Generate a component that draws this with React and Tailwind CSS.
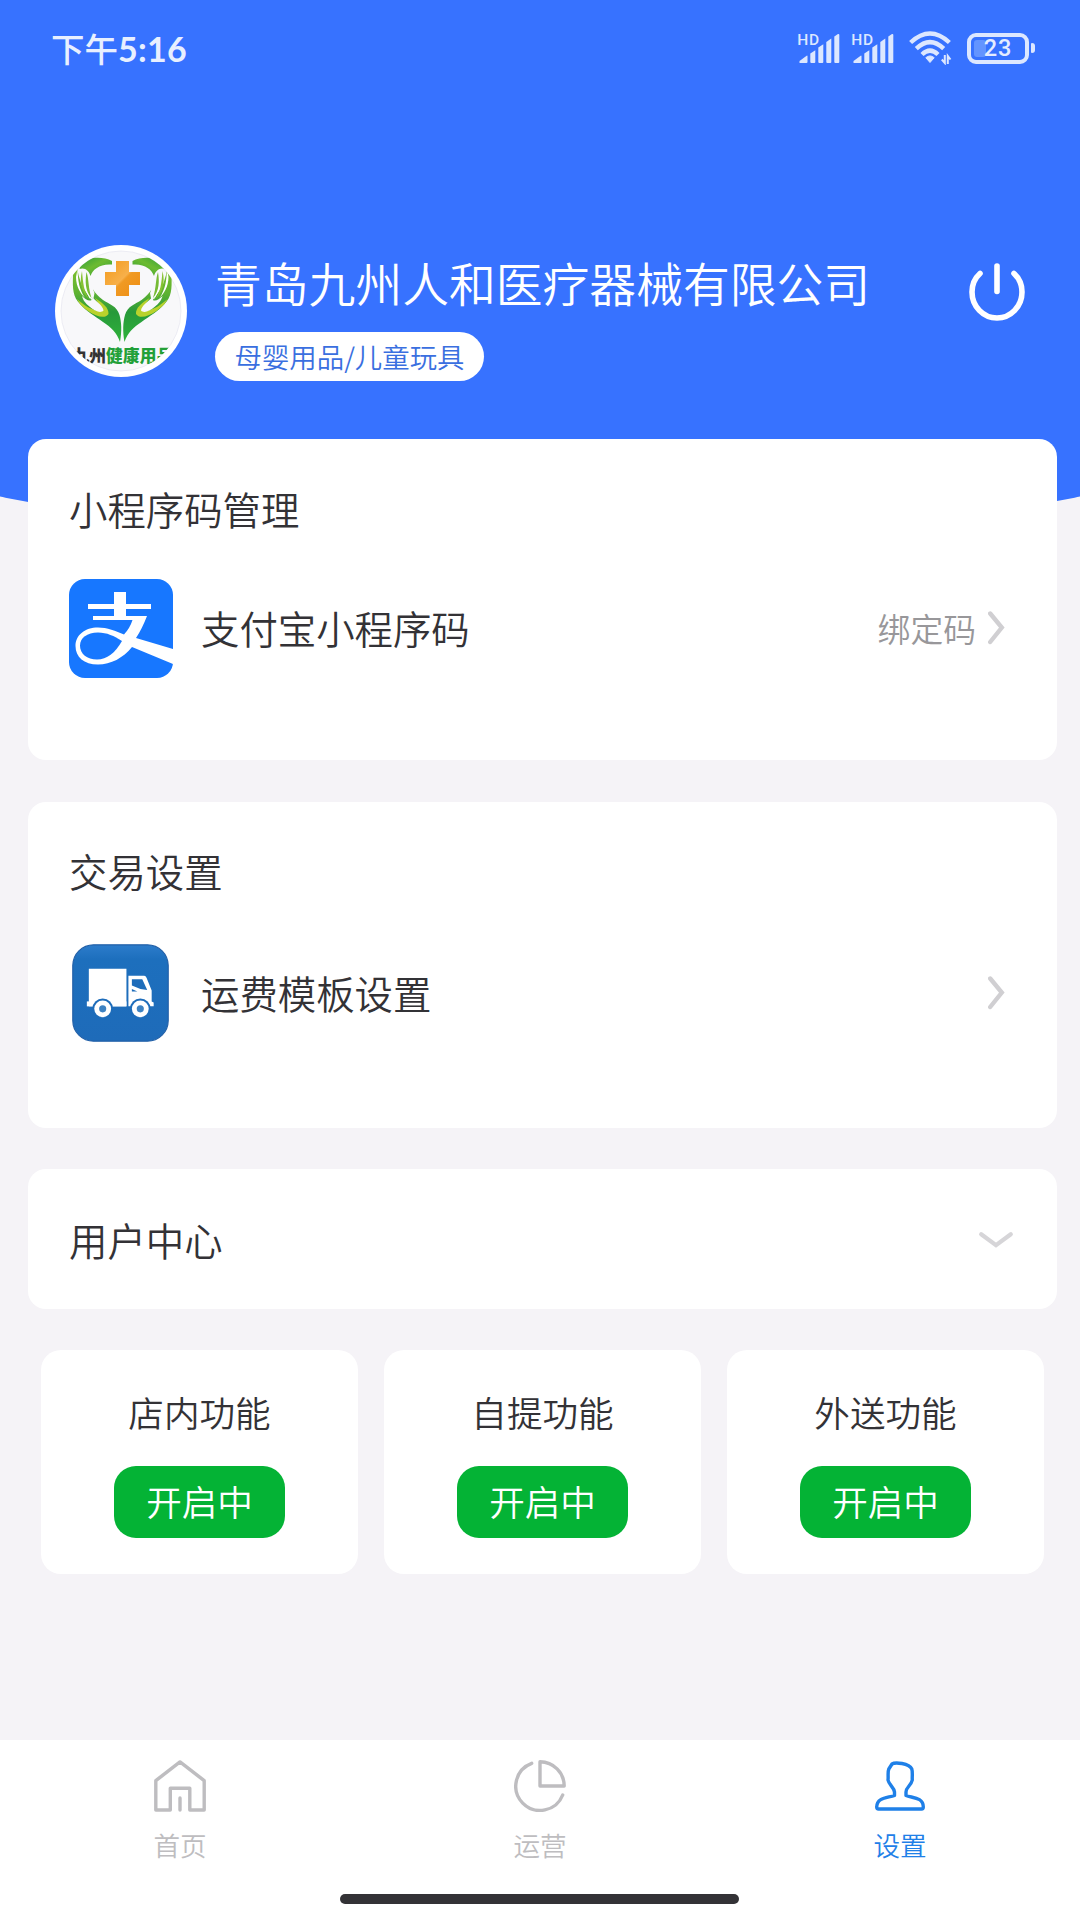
const SignalIcon = () => (
  <svg className="w-[42px] h-[31px] overflow-visible" viewBox="0 0 42 31">
    <text x="-0.800" y="11.500" fontSize="15.500" fontWeight="500" letterSpacing="0.800" fill="#dce7ff" fontFamily="Roboto, sans-serif">HD</text>
    <g fill="#dce7ff">
      <path d="M1.500 30 V28 L9 22.500 Q9.500 22.500 9.500 23.500 V29 Q9.500 30 8.500 30 Z" />
      <path d="M12.300 20.500 L17.300 17.300 V29 Q17.300 30 16.300 30 H13.300 Q12.300 30 12.300 29 Z" />
      <path d="M20.300 14.500 L25.300 11.200 V29 Q25.300 30 24.300 30 H21.300 Q20.300 30 20.300 29 Z" />
      <path d="M28.300 9 L33.300 5.600 V29 Q33.300 30 32.300 30 H29.300 Q28.300 30 28.300 29 Z" />
      <path d="M36.300 3.500 L40 1 Q41.300 0.600 41.300 2 V29 Q41.300 30 40.300 30 H37.300 Q36.300 30 36.300 29 Z" />
    </g>
  </svg>
);

const WifiIcon = () => (
  <svg className="w-[44px] h-[34px]" viewBox="0 0 44 34" fill="none" stroke="#dce7ff" strokeWidth="4.400">
    <path d="M1.600 11.500 Q21 -6.500 40.400 11.500" />
    <path d="M7.300 17.700 Q21 4.500 34.700 17.700" />
    <path d="M13 23.500 Q21 15.800 29 23.500" />
    <path d="M21 31.500 L16.800 26.700 Q21 23.200 25.200 26.700 Z" fill="#dce7ff" stroke="#dce7ff" strokeWidth="1" />
    <path d="M35.800 24 V32 L32.800 28.500 M38.800 33 V25 L41.500 28.500" strokeWidth="2" />
  </svg>
);

const BatteryIcon = () => (
  <div className="flex items-center gap-[2px]">
    <div className="relative flex h-[31px] w-[62px] items-center justify-center rounded-[9px] border-4 border-[#dce7ff]">
      <div className="absolute left-[3px] top-[3px] h-[17px] w-[12px] rounded-[3px] bg-[#6394ff]" />
      <span className="relative top-px font-[Roboto,sans-serif] text-[23.500px] font-medium leading-none tracking-[0.800px] text-[#e4ecff]">23</span>
    </div>
    <div className="h-[10px] w-[4px] rounded-r-[3px] rounded-l-[1px] bg-[#dce7ff]" />
  </div>
);

const HandHalf = () => (
  <g>
    <path d="M57 16 C50 12 38 12 33 14.500 C28 17 25 21 24.500 24 C30 22 34 26 35.500 31 C38 24 45 18.500 57 19.500 Z" fill="url(#leaf)" />
    <path d="M22 22 C18.500 24 18 26 18 31 C17.500 44 18 52 25 59 C31 66 40 71 48 77 C56 82 62 88 65 97 C67 86 66.500 77 64.500 70 C62 61 54 59 48 55 C43 51 40 48 38 44.500 L37.500 56 C33 50 29 45 26 38 Q23 30 22 22 Z" fill="url(#palm)" />
    <path d="M22.500 24 C23 36 24 44 30 53 C26 49 21 42 21 32 Z" fill="#fff" />
    <path d="M27 26 C28 38 29 47 34 54 C27 48 24 38 27 26 Z" fill="#86c232" />
    <path d="M29.500 33 C29 43 32 49 35.500 54.500 C34 47 32 42 32 33 Z" fill="#fff" />
    <path d="M31.500 27 C34 34 33 42 36.500 53 C30 46 30 36 31.500 27 Z" fill="#76bb35" />
    <path d="M35 33 L34.500 42 L38 56 L39.500 48 L37.500 43 Z" fill="#f8f8fa" />
    <path d="M40 53 C48 58 54 63 53.500 69 C50 74 42 72 33 66 C28 62 25 60 22 54 C29 60 36 65 44 66 C47 64 44 59 40 53 Z" fill="#b9d22c" />
    <path d="M38 53 C42 57 48 61 48.500 65.500 C46 68.500 40 66.500 35 62 C30 58 28 55 27 51 C31 55 36 58 38 53 Z" fill="#f8f8fa" />
  </g>
);

const Avatar = () => (
  <div className="h-[132px] w-[132px] shrink-0 rounded-full bg-white">
    <svg className="h-full w-full" viewBox="0 0 132 132">
      <defs>
        <linearGradient id="leaf" x1="0" y1="0" x2="1" y2="1">
          <stop offset="0" stopColor="#2f9e3a" />
          <stop offset="0.450" stopColor="#6cbb31" />
          <stop offset="1" stopColor="#2c9c3a" />
        </linearGradient>
        <linearGradient id="palm" x1="0" y1="0" x2="0" y2="1">
          <stop offset="0" stopColor="#7fc02c" />
          <stop offset="0.350" stopColor="#5db232" />
          <stop offset="0.600" stopColor="#27993a" />
          <stop offset="1" stopColor="#2fb33a" />
        </linearGradient>
        <linearGradient id="cross" x1="0" y1="0" x2="1" y2="1">
          <stop offset="0" stopColor="#f39a1c" />
          <stop offset="0.500" stopColor="#f7b04a" />
          <stop offset="0.550" stopColor="#f09a24" />
          <stop offset="1" stopColor="#ee8d12" />
        </linearGradient>
        <clipPath id="photo"><circle cx="66" cy="66" r="60" /></clipPath>
      </defs>
      <circle cx="66" cy="66" r="60" fill="#f8f8fa" stroke="#e3e3ee" strokeWidth="0.600" />
      <g clipPath="url(#photo)">
        <HandHalf />
        <g transform="translate(134.500 0) scale(-1 1)"><HandHalf /></g>
        <path d="M61 16 H74 V27 H85 V40 H74 V51 H61 V40 H50 V27 H61 Z" fill="url(#cross)" />
        <text x="17.500" y="116.800" fontSize="16.800" fontWeight="900" fontFamily="Noto Sans CJK SC, sans-serif" fill="#333">
          九州<tspan fill="#22a038">健康用品</tspan>
        </text>
      </g>
    </svg>
  </div>
);

const PowerIcon = () => (
  <svg className="h-[60px] w-[58px]" viewBox="0 0 58 60" fill="none" stroke="#fff" strokeWidth="5.600" strokeLinecap="round">
    <path d="M12 11.500 C6.500 16.500 4 23 4 30 A25 26 0 0 0 54 30 C54 23 51.500 16.500 46 11.500" />
    <path d="M29 4 V29.500" />
  </svg>
);

const AlipayIcon = () => (
  <svg className="h-[99px] w-[104px]" viewBox="0 0 104 99">
    <rect width="104" height="99" rx="16" fill="#1777ff" />
    <g fill="#fff">
      <path d="M45 13 H57 V25 H82 V30 H57 V37 H78 Q73 50 67 59 L104 70 V85 L63 68 C54 79 42 85.500 29 85.500 C15 85.500 6.500 78 6.500 67 C6.500 56 16 48.500 29 48.500 C38 48.500 47 52 55 55.500 Q61 49 63.500 41 H24 V37 H45 V30 H19 V25 H45 Z" />
    </g>
    <path d="M53 62 C45 57 38 53.500 29 53.500 C18 53.500 11 59 11 66.500 C11 75 18 80.500 28 80.500 C38 80.500 46 74 53 62 Z" fill="#1777ff" />
  </svg>
);

const TruckIcon = () => (
  <svg className="h-[98px] w-[97px]" viewBox="0 0 98 99">
    <defs>
      <linearGradient id="tile" x1="0" y1="0" x2="0" y2="1">
        <stop offset="0" stopColor="#2c7ccb" />
        <stop offset="0.150" stopColor="#1d6fbd" />
        <stop offset="1" stopColor="#1e6bb9" />
      </linearGradient>
    </defs>
    <rect x="0.800" y="0.800" width="96.400" height="97.400" rx="21" fill="url(#tile)" stroke="#2260a8" strokeWidth="1.200" />
    <g fill="#fff">
      <rect x="17" y="25" width="38" height="38" />
      <rect x="15" y="58" width="40" height="5" />
      <path d="M57 32 H73 Q74.500 32 75.300 34 L80.500 47 V58 L82.500 59 V63 H57 Z" />
    </g>
    <path d="M60.500 35.500 H71 L76 46.500 Q68 46 60.500 42 Z" fill="#1d6cba" />
    <path d="M60.500 45.500 L66 48 H60.500 Z" fill="#1d6cba" />
    {[31, 69].map((cx) => (
      <g key={cx}>
        <circle cx={cx} cy="65.500" r="10.500" fill="#1d6cba" />
        <circle cx={cx} cy="65.500" r="8.500" fill="#fff" />
        <circle cx={cx} cy="65.500" r="3.600" fill="#3d82c2" />
      </g>
    ))}
  </svg>
);

const ChevronRight = () => (
  <svg className="h-[34px] w-[17px]" viewBox="0 0 17 34" fill="none" stroke="#d0cfd2" strokeWidth="4.400" strokeLinecap="round">
    <path d="M2.200 2.500 L13.800 16.500 L2.200 31" />
  </svg>
);

const ChevronDown = () => (
  <svg className="h-[18px] w-[36px]" viewBox="0 0 36 18" fill="none" stroke="#d6d5d8" strokeWidth="4.200" strokeLinecap="round">
    <path d="M3.200 3.200 L18 14.200 L32.800 3.200" />
  </svg>
);

const HomeIcon = () => (
  <path d="M1.800 50 V20.700 L26 1.900 L50.200 20.700 V50 H35.800 V28.300 H16.300 V50 Z M26 38 V50" />
);
const PieIcon = () => (
  <path d="M26 1.800 A24.300 24.300 0 0 1 50.200 26 H26 Z M17.700 3.300 A24.300 24.300 0 1 0 48.700 35" />
);
const PersonIcon = () => (
  <path d="M18 4 C21 2 35 3 37.800 9 C38.800 12 38 17 38.300 20 C37 26 32 27 32 32 V35.500 C38 38 49.300 37 49.300 47 Q49.300 49 47.500 49 H4.500 Q2.700 49 2.700 47 C3 37 14 38 20.500 35.500 V32 C20 27 15 25 14 20 C14.500 17 13.500 12 14.800 9 Z" />
);

const tabs = [
  { label: "首页", Icon: HomeIcon, color: "text-[#bebdc0]" },
  { label: "运营", Icon: PieIcon, color: "text-[#bebdc0]" },
  { label: "设置", Icon: PersonIcon, color: "text-[#1f80e8]" },
];

const features = ["店内功能", "自提功能", "外送功能"];

export default function App() {
  return (
    <div className="relative flex h-[1920px] w-[1080px] flex-col overflow-hidden bg-[#f5f3f7] font-['Noto_Sans_CJK_SC',sans-serif] font-[350] text-[#333236]">
      <div className="absolute -left-[216px] top-0 h-[541px] w-[1512px] rounded-b-[50%_148px] bg-[#3772ff]" />

      <header className="relative flex h-[439px] shrink-0 flex-col text-white">
        <div className="flex h-[96px] items-center justify-between pl-[51px] pr-[45px]">
          <span className="flex items-center leading-[48px] text-[#e8f0ff]">
            <span className="text-[33.500px] font-medium">下午</span>
            <span className="mt-px font-[Lato,sans-serif] text-[34px] font-bold tracking-[0.300px]">5:16</span>
          </span>
          <div className="flex items-center">
            <SignalIcon />
            <div className="ml-3"><SignalIcon /></div>
            <div className="ml-[15px]"><WifiIcon /></div>
            <div className="ml-[14px]"><BatteryIcon /></div>
          </div>
        </div>
        <div className="mt-[149px] flex pl-[55px] pr-[54px]">
          <Avatar />
          <div className="ml-7 flex-1">
            <h1 className="mt-[7px] h-[60px] whitespace-nowrap text-[46.800px] leading-[60px]">青岛九州人和医疗器械有限公司</h1>
            <div className="mt-5 flex h-[49px] w-[269px] items-center justify-center rounded-full bg-white text-[27.400px] leading-[49px] text-[#3a6fe0]">
              母婴用品/儿童玩具
            </div>
          </div>
          <div className="mt-[17px]"><PowerIcon /></div>
        </div>
      </header>

      <main className="relative flex flex-1 flex-col pl-7 pr-[23px] text-[38.400px]">
        <section className="h-[321px] rounded-[18px] bg-white px-[41px] pt-[39px]">
          <h2 className="leading-[60px]">小程序码管理</h2>
          <div className="mt-[41px] flex h-[99px] items-center">
            <AlipayIcon />
            <span className="mb-[3px] ml-7 flex-1 leading-[60px]">支付宝小程序码</span>
            <span className="mb-px text-[32.800px] text-[#98979a]">绑定码</span>
            <div className="mb-px ml-3 mr-[11px]"><ChevronRight /></div>
          </div>
        </section>

        <section className="mt-[42px] h-[326px] rounded-[18px] bg-white px-[41px] pt-[38px]">
          <h2 className="leading-[60px]">交易设置</h2>
          <div className="mt-[44px] flex h-[98px] items-center">
            <div className="ml-[3px]"><TruckIcon /></div>
            <span className="mb-[2px] ml-8 flex-1 leading-[60px]">运费模板设置</span>
            <div className="mr-[11px]"><ChevronRight /></div>
          </div>
        </section>

        <section className="mt-[41px] flex h-[140px] items-center justify-between rounded-[18px] bg-white pl-[41px] pr-[43px]">
          <h2 className="mb-px leading-[60px]">用户中心</h2>
          <div className="mt-px"><ChevronDown /></div>
        </section>

        <div className="mt-[41px] grid grid-cols-3 gap-[26px] pl-[13px] pr-[13px]">
          {features.map((name) => (
            <div key={name} className="flex h-[224px] flex-col items-center rounded-[20px] bg-white pt-[36px] text-[35.600px]">
              <div className="leading-[52px]">{name}</div>
              <button className="mt-7 h-[72px] w-[171px] rounded-[22px] bg-[#04b335] pb-[2px] leading-[68px] text-white">开启中</button>
            </div>
          ))}
        </div>
      </main>

      <nav className="relative flex h-[180px] shrink-0 flex-col items-center bg-white">
        <div className="grid w-full flex-1 grid-cols-3">
          {tabs.map(({ label, Icon, color }) => (
            <div key={label} className={`flex flex-col items-center pt-5 ${color}`}>
              <svg className="h-[52px] w-[52px]" viewBox="0 0 52 52" fill="none" stroke="currentColor" strokeWidth="3.400" strokeLinecap="round" strokeLinejoin="round">
                <Icon />
              </svg>
              <span className="mt-[13px] text-[26.600px] leading-[40px]">{label}</span>
            </div>
          ))}
        </div>
        <div className="mb-4 mr-px h-[10px] w-[399px] rounded-full bg-[#333236]" />
      </nav>
    </div>
  );
}
